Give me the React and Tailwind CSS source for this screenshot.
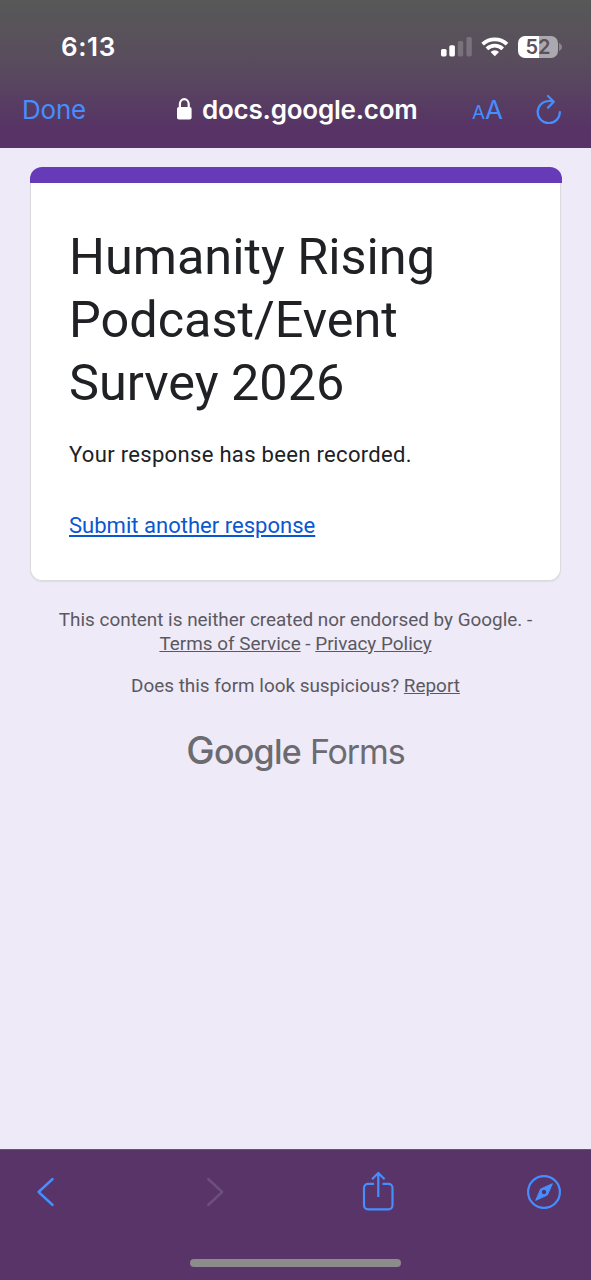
import React from "react";

const StatusBar = () => (
  <div className="h-[47px] mt-[23px] pl-[61px] pr-[29px] flex items-center justify-between text-white">
    <span className="text-[26px] leading-none font-semibold tracking-[0.6px]">6:13</span>
    <div className="flex items-center">
      <svg width="32" height="20" viewBox="0 0 32 20" fill="currentColor">
        <rect x="1" y="12" width="5.6" height="7.4" rx="1.6" />
        <rect x="9.3" y="8.2" width="5.6" height="11.2" rx="1.6" />
        <rect x="17.8" y="4" width="5.4" height="15.4" rx="1.6" opacity="0.2" />
        <rect x="26.4" y="0" width="5.4" height="19.4" rx="1.6" opacity="0.2" />
      </svg>
      <svg className="ml-[9px]" width="28" height="20" viewBox="0 0 28 20" fill="none" stroke="currentColor" strokeWidth="3.8">
        <path d="M1.6 7.2a17.6 17.6 0 0 1 24.4 0" />
        <path d="M5.9 11.8a11.5 11.5 0 0 1 15.8 0" />
        <path d="M13.8 19.2l-4.2-4.3a6 6 0 0 1 8.4 0z" fill="currentColor" stroke="none" />
      </svg>
      <div className="ml-[9px] w-10 h-[22px] rounded-[7px] bg-linear-to-r from-white from-52% to-[#aca8af] to-52% flex items-center justify-center">
        <span className="text-[20px] leading-none font-semibold text-[#5a505e]">52</span>
      </div>
      <svg className="ml-px" width="3" height="8" viewBox="0 0 3 8" fill="#8d8691">
        <path d="M0 0c4 1.5 4 6.5 0 8z" />
      </svg>
    </div>
  </div>
);

const AddressBar = () => (
  <div className="h-[78px] pt-px pl-[22px] pr-[29px] flex items-center text-[#458eff]">
    <span className="w-[155px] text-[26px] leading-none tracking-[-0.2px]">Done</span>
    <svg className="-mt-[1px]" width="15" height="22" viewBox="0 0 15 22" fill="none">
      <rect x="0" y="9" width="14.6" height="12.5" rx="2" fill="white" />
      <path d="M2.9 10V6.1a4.4 4.9 0 0 1 8.800 0V10" stroke="white" strokeWidth="2.2" />
    </svg>
    <span className="ml-2.5 text-[26px] leading-none font-semibold tracking-[-0.22px] text-white">docs.google.com</span>
    <div className="ml-auto flex items-baseline leading-none">
      <span className="text-[19px]">A</span>
      <span className="text-[26px]">A</span>
    </div>
    <svg className="ml-[33px] -mt-0.5" width="26" height="30" viewBox="0 0 26 30" fill="none" stroke="currentColor" strokeWidth="2.2" strokeLinecap="round" strokeLinejoin="round">
      <path d="M17 7.6C15.5 7 14 6.9 12.7 7A11.1 11.1 0 1 0 23.9 18" />
      <path d="M12 2l5.8 5.8-5.8 5.8" />
    </svg>
  </div>
);

const ResponseCard = () => (
  <div className="mx-[30px] mt-[19px] h-[414px] rounded-[12px] bg-white border border-[#dadce0] border-t-0 shadow-[0_1px_1px_#dddce4]">
    <div className="h-[16px] -mx-[1.5px] rounded-t-[12px] bg-[#673ab7]" />
    <div className="px-[38px] pt-[42px] text-[#202124]">
      <h1 className="text-[50.4px] leading-[63px]">
        Humanity Rising
        <br />
        Podcast/Event
        <br />
        Survey 2026
      </h1>
      <p className="mt-[25px] text-[22.06px] leading-[31px] tracking-[0.3px]">Your response has been recorded.</p>
      <a href="#" className="block w-fit mt-10 text-[22.06px] leading-[31px] text-[#0b57d0] underline">
        Submit another response
      </a>
    </div>
  </div>
);

const Footer = () => (
  <footer className="text-center text-[18.9px] text-[#5b5960]">
    <p className="mt-[27px] leading-6">
      This content is neither created nor endorsed by Google. -
      <br />
      <a href="#" className="underline">Terms of Service</a> - <a href="#" className="underline">Privacy Policy</a>
    </p>
    <p className="mt-[18px] leading-6">
      Does this form look suspicious? <a href="#" className="underline">Report</a>
    </p>
    <div className="mt-[27px] flex items-baseline justify-center font-[Inter] leading-[50px] text-[#6c6b70]">
      <span className="inline-block text-[34px] font-medium tracking-[-0.75px] first-letter:text-[38px]">Google</span>
      <span className="ml-[9px] text-[34px] tracking-[-1.1px]">Forms</span>
    </div>
  </footer>
);

const BottomBar = () => (
  <div className="h-[131px] border-t border-[#6b5178] bg-[#583468] text-[#458eff]">
    <div className="h-[84px] pl-9 pr-[30px] flex items-center">
      <svg width="19" height="30" viewBox="0 0 19 30" fill="none" stroke="currentColor" strokeWidth="2.4" strokeLinecap="round" strokeLinejoin="round">
        <path d="M16.6 2L2.6 15l14 13" />
      </svg>
      <svg className="ml-[151px]" width="19" height="30" viewBox="0 0 19 30" fill="none" stroke="#6d4f7c" strokeWidth="2.4" strokeLinecap="round" strokeLinejoin="round">
        <path d="M2.2 2l14 13-14 13" />
      </svg>
      <svg className="ml-[137px] -mt-0.5" width="32" height="40" viewBox="0 0 32 40" fill="none" stroke="currentColor" strokeWidth="2.2" strokeLinejoin="round">
        <path d="M12 12.8H6a4 4 0 0 0-4 4v17.500a4 4 0 0 0 4 4h20.500a4 4 0 0 0 4-4v-17.500a4 4 0 0 0-4-4h-6" />
        <path d="M16.300 26V2.500M10 8.300l6.300-6.300 6.300 6.300" />
      </svg>
      <svg className="ml-auto" width="34" height="34" viewBox="0 0 34 34" fill="none">
        <circle cx="17" cy="17" r="15.9" stroke="currentColor" strokeWidth="2.2" />
        <path d="M25.4 8.7L20.4 20 8.7 25.4 13.6 14z" fill="currentColor" stroke="currentColor" strokeLinejoin="round" />
        <circle cx="17" cy="17" r="2.2" fill="#583468" />
      </svg>
    </div>
    <div className="mx-auto mt-[25px] w-[211px] h-2 rounded-full bg-[#8c8c8c]" />
  </div>
);

const App = () => {
  return (
    <div className="w-full h-screen flex flex-col overflow-hidden bg-[#eeeaf8]">
      <header className="h-[148px] shrink-0 flex flex-col font-[Inter] bg-linear-to-b from-[#575857] via-[#594d5d] via-40% to-[#573465] to-85%">
        <StatusBar />
        <AddressBar />
      </header>
      <main className="flex-1 flex flex-col font-[Roboto]">
        <ResponseCard />
        <Footer />
      </main>
      <BottomBar />
    </div>
  );
};

export default App;
